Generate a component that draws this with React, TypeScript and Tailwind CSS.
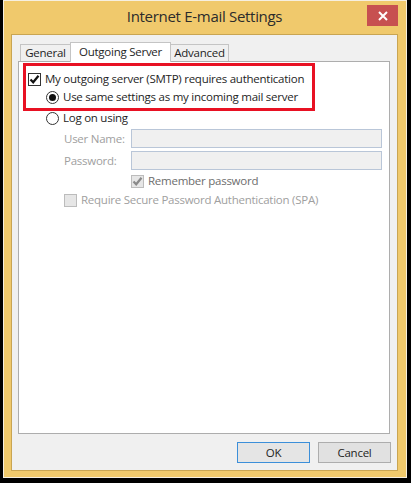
import React from 'react';

const font = { fontFamily: '"Open Sans", "Noto Sans", Arial, sans-serif' };

function CheckBox({ checked, disabled }: { checked?: boolean; disabled?: boolean }) {
  return (
    <span
      className={`flex h-[13px] w-[13px] shrink-0 items-center justify-center border ${
        disabled ? 'border-[#bcbcbc] bg-[#e6e6e6]' : 'border-[#333333] bg-white'
      }`}
    >
      {checked && (
        <svg width="11" height="11" viewBox="0 0 11 11">
          <path
            d="M1.5 5.5 L4.2 8.3 L9.5 1.8"
            fill="none"
            stroke={disabled ? '#8a8a8a' : '#111111'}
            strokeWidth="2.2"
          />
        </svg>
      )}
    </span>
  );
}

function Radio({ checked }: { checked?: boolean }) {
  return (
    <span className="flex h-[13px] w-[13px] shrink-0 items-center justify-center rounded-full border border-[#333333] bg-white">
      {checked && <span className="h-[7px] w-[7px] rounded-full bg-[#111111]" />}
    </span>
  );
}

export default function App() {
  return (
    <div
      className="flex h-[483px] w-[411px] bg-black pb-[5px] pl-[3px] pr-[4px] text-[11.5px] tracking-[-0.25px] text-[#1e1e1e]"
      style={font}
    >
      {/* window frame */}
      <div className="flex flex-1 flex-col border border-[#f6efe0] bg-[#f0c96c] pb-[6px] pl-[7px] pr-[8px]">
        {/* title bar */}
        <div className="relative flex h-[33px] items-center justify-center">
          <span className="pb-[3px] text-[15px] tracking-[-0.3px] text-[#2b2b2b]">Internet E-mail Settings</span>
          <div className="absolute right-[0px] top-[4px] flex h-[21px] w-[31px] items-center justify-center bg-[#c75050]">
            <svg width="10" height="10" viewBox="0 0 10 10">
              <path d="M1 1 L9 9 M9 1 L1 9" stroke="white" strokeWidth="2" />
            </svg>
          </div>
        </div>

        {/* client area */}
        <div className="flex flex-1 flex-col border border-[#c9a552] bg-[#f0f0f0] pl-[6px] pr-[7px] pt-[7px]">
          {/* tabs */}
          <div className="relative z-10 ml-[2px] flex h-[19px] items-end">
            <div className="flex h-[17px] w-[51px] items-center justify-center border border-b-0 border-[#c4c4c4] bg-[#f0f0f0]">
              General
            </div>
            <div className="-mb-px -ml-px flex h-[20px] w-[101px] items-center justify-center border border-b-0 border-[#c4c4c4] bg-white pb-[2px]">
              Outgoing Server
            </div>
            <div className="-ml-px flex h-[17px] w-[59px] items-center justify-center border border-b-0 border-[#c4c4c4] bg-[#f0f0f0]">
              Advanced
            </div>
          </div>

          {/* tab panel */}
          <div className="relative flex flex-1 flex-col border border-[#adadad] bg-white pl-[9px] pt-[8px]">
            <div className="flex h-[18px] items-center gap-[4px]">
              <CheckBox checked />
              <span>My outgoing server (SMTP) requires authentication</span>
            </div>
            <div className="ml-[18px] flex h-[18px] items-center gap-[4px]">
              <Radio checked />
              <span>Use same settings as my incoming mail server</span>
            </div>
            <div className="ml-[18px] mt-[3px] flex h-[18px] items-center gap-[4px]">
              <Radio />
              <span>Log on using</span>
            </div>
            <div className="ml-[36px] mt-[2px] flex h-[19px] items-center text-[#a0a0a0]">
              <span className="w-[67px]">User Name:</span>
              <div className="h-[19px] w-[251px] border border-[#b9c6d8] bg-[#f0f0f0]" />
            </div>
            <div className="ml-[36px] mt-[3px] flex h-[19px] items-center text-[#a0a0a0]">
              <span className="w-[67px]">Password:</span>
              <div className="h-[19px] w-[251px] border border-[#b9c6d8] bg-[#f0f0f0]" />
            </div>
            <div className="ml-[103px] mt-[2px] flex h-[18px] items-center gap-[4px] text-[#6d6d6d]">
              <CheckBox checked disabled />
              <span>Remember password</span>
            </div>
            <div className="ml-[36px] mt-[1px] flex h-[18px] items-center gap-[4px] text-[#a0a0a0]">
              <CheckBox disabled />
              <span>Require Secure Password Authentication (SPA)</span>
            </div>

            {/* annotation highlight */}
            <div className="absolute left-[4px] top-[1px] h-[48px] w-[292px] border-[3px] border-[#e81123]" />
          </div>

          {/* buttons */}
          <div className="-mr-px flex h-[36px] items-start justify-end gap-[8px] pt-[8px]">
            <button className="flex h-[21px] w-[73px] items-center justify-center border border-[#3c8fd9] bg-[#e5e5e5]">
              OK
            </button>
            <button className="flex h-[21px] w-[73px] items-center justify-center border border-[#adadad] bg-[#e1e1e1]">
              Cancel
            </button>
          </div>
        </div>
      </div>
    </div>
  );
}
